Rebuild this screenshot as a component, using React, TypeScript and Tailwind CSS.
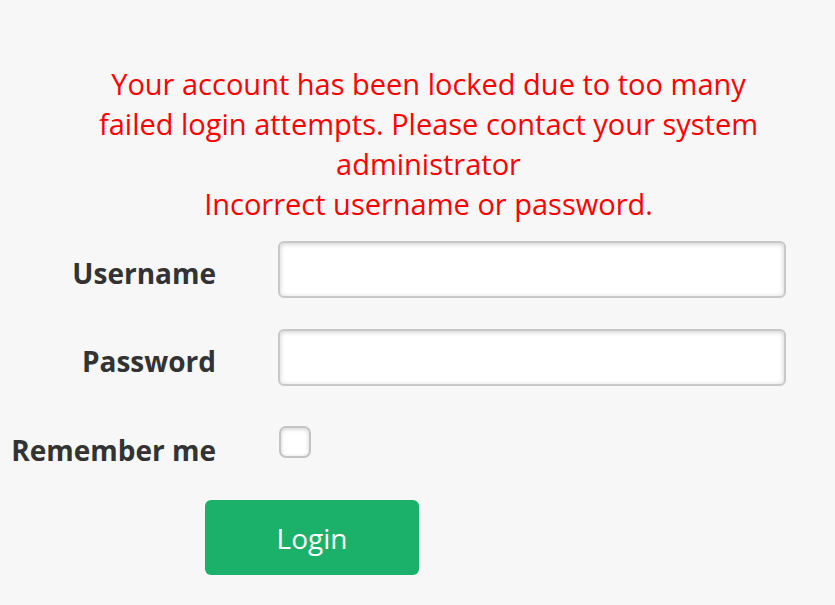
export default function App() {
  return (
    <div
      className="min-h-[605px] w-full bg-[#f7f7f7] text-[#333] pt-[64px]"
      style={{ fontFamily: '"Open Sans", "Liberation Sans", sans-serif' }}
    >
      <div className="pl-[22px] text-center text-[29px] leading-[40px] text-[#ff0000]">
        <p className="mx-auto max-w-[690px]">
          Your account has been locked due to too many failed login attempts. Please contact your system administrator
        </p>
        <p>Incorrect username or password.</p>
      </div>

      <form className="mt-[17px] flex flex-col">
        <div className="flex items-start gap-[63px]">
          <label className="w-[216px] shrink-0 pt-[12px] text-right text-[28px] font-bold leading-[40px]">
            Username
          </label>
          <input
            type="text"
            className="-ml-[1px] h-[57px] w-[508px] rounded-[6px] border-2 border-[#c8c8c8] bg-white px-3 shadow-[inset_0_1px_5px_rgba(0,0,0,0.2)] outline-none"
          />
        </div>
        <div className="mt-[31px] flex items-start gap-[63px]">
          <label className="w-[216px] shrink-0 pt-[12px] text-right text-[28px] font-bold leading-[40px]">
            Password
          </label>
          <input
            type="password"
            className="-ml-[1px] h-[57px] w-[508px] rounded-[6px] border-2 border-[#c8c8c8] bg-white px-3 shadow-[inset_0_1px_5px_rgba(0,0,0,0.2)] outline-none"
          />
        </div>
        <div className="mt-[40px] flex items-start gap-[63px]">
          <label className="w-[216px] shrink-0 pt-[4px] text-right text-[28px] font-bold leading-[40px]">
            Remember me
          </label>
          <input
            type="checkbox"
            className="h-[32px] w-[32px] appearance-none rounded-[7px] border-2 border-[#c4c4c4] bg-white shadow-[inset_0_1px_4px_rgba(0,0,0,0.2)]"
          />
        </div>
        <div className="mt-[30px] pl-[205px]">
          <button
            type="button"
            className="h-[75px] w-[214px] rounded-[6px] bg-[#1bb16b] text-[28px] text-white"
          >
            Login
          </button>
        </div>
      </form>
    </div>
  );
}
